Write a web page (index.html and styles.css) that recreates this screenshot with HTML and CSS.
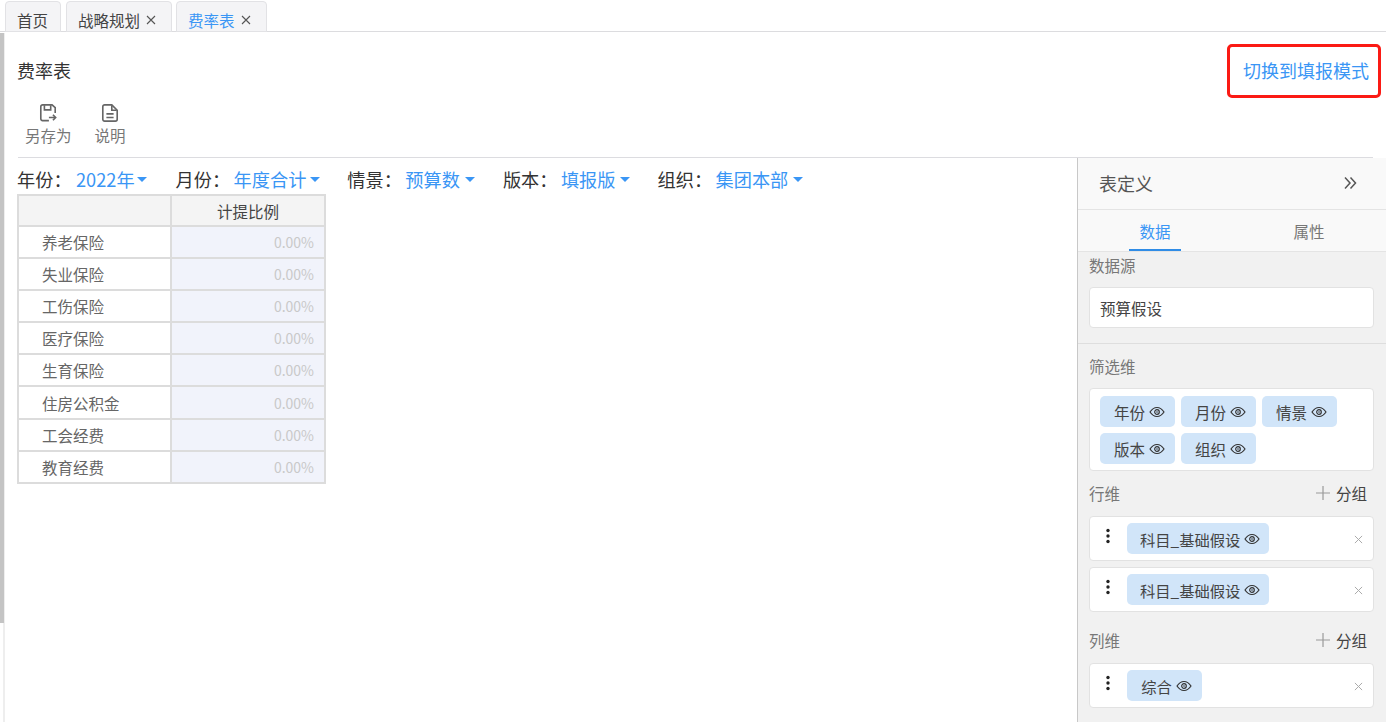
FILE: index.html
```html
<!DOCTYPE html>
<html lang="zh-CN">
<head>
  <meta charset="UTF-8" />
  <title>费率表</title>
  <link rel="stylesheet" href="styles.css">
</head>
<body>

  <svg class="defs" width="0" height="0">
    <symbol id="eye" viewBox="0 0 16 16">
      <path d="M1 8c2-3 4.400-4.500 7-4.500S13 5 15 8c-2 3-4.400 4.500-7 4.500S3 11 1 8z" fill="none" stroke="#333" stroke-width="1.200"/>
      <circle cx="8" cy="8" r="2.300" fill="none" stroke="#333" stroke-width="1.200"/>
      <circle cx="8" cy="8" r="0.800" fill="#333"/>
    </symbol>
    <symbol id="dots" viewBox="0 0 4 16">
      <circle cx="2" cy="2.500" r="1.700" fill="#222"/>
      <circle cx="2" cy="8" r="1.700" fill="#222"/>
      <circle cx="2" cy="13.500" r="1.700" fill="#222"/>
    </symbol>
    <symbol id="close" viewBox="0 0 10 10">
      <path d="M1 1l8 8M9 1l-8 8" fill="none" stroke="currentColor" stroke-width="1.100"/>
    </symbol>
    <symbol id="plus" viewBox="0 0 16 16">
      <path d="M8 1v14M1 8h14" fill="none" stroke="#9a9a9a" stroke-width="1.200"/>
    </symbol>
  </svg>

  <div class="tabs">
    <div class="tab tab-home">首页</div>
    <div class="tab tab-plan">战略规划<svg class="tab-close"><use href="#close"/></svg></div>
    <div class="tab tab-rate active">费率表<svg class="tab-close"><use href="#close"/></svg></div>
  </div>

  <div class="page">
    <div class="scroll-thumb"></div>

    <div class="title-row">
      <h1>费率表</h1>
      <a class="switch-mode">切换到填报模式</a>
    </div>

    <div class="tools">
      <div class="tool tool-save">
        <svg width="18" height="18" viewBox="0 0 20 20" fill="none" stroke="#666" stroke-width="1.800">
          <path d="M11 18.500H4a2 2 0 0 1-2-2V3a2 2 0 0 1 2-2h10.500L18 4v6"/>
          <path d="M6 1.500V6.500h7V1.500"/>
          <path d="M11 15h7.500M15.500 12l3 3-3 3"/>
        </svg>
        <span>另存为</span>
      </div>
      <div class="tool tool-note">
        <svg width="18" height="18" viewBox="0 0 20 20" fill="none" stroke="#666" stroke-width="1.800">
          <path d="M4 1h8l6 6v10a2 2 0 0 1-2 2H4a2 2 0 0 1-2-2V3a2 2 0 0 1 2-2z"/>
          <path d="M12 1.500V7h5.500M6 11h8M6 15h8"/>
        </svg>
        <span>说明</span>
      </div>
    </div>

    <div class="main">
      <div class="content">
        <div class="filters">
          <div class="filter f-year"><label>年份：</label><span class="val">2022年</span><i class="caret"></i></div>
          <div class="filter f-month"><label>月份：</label><span class="val">年度合计</span><i class="caret"></i></div>
          <div class="filter f-scene"><label>情景：</label><span class="val">预算数</span><i class="caret"></i></div>
          <div class="filter f-ver"><label>版本：</label><span class="val">填报版</span><i class="caret"></i></div>
          <div class="filter f-org"><label>组织：</label><span class="val">集团本部</span><i class="caret"></i></div>
        </div>

        <table class="rate-table">
          <tr><th></th><th>计提比例</th></tr>
          <tr><td class="name">养老保险</td><td class="num">0.00%</td></tr>
          <tr><td class="name">失业保险</td><td class="num">0.00%</td></tr>
          <tr><td class="name">工伤保险</td><td class="num">0.00%</td></tr>
          <tr><td class="name">医疗保险</td><td class="num">0.00%</td></tr>
          <tr><td class="name">生育保险</td><td class="num">0.00%</td></tr>
          <tr><td class="name">住房公积金</td><td class="num">0.00%</td></tr>
          <tr><td class="name">工会经费</td><td class="num">0.00%</td></tr>
          <tr><td class="name">教育经费</td><td class="num">0.00%</td></tr>
        </table>
      </div>

      <div class="panel">
        <div class="panel-head">
          <span>表定义</span>
          <svg width="14" height="14" viewBox="0 0 14 14" fill="none" stroke="#555" stroke-width="1.500">
            <path d="M2 1.500L7 7l-5 5.500M7.500 1.500L12.500 7l-5 5.500"/>
          </svg>
        </div>
        <div class="panel-tabs">
          <div class="panel-tab active">数据</div>
          <div class="panel-tab">属性</div>
        </div>

        <div class="section source">
          <div class="sec-title">数据源</div>
          <div class="box source-box">预算假设</div>
        </div>

        <div class="section">
          <div class="sec-title filter-title">筛选维</div>
          <div class="box chips-box">
            <span class="chip">年份<svg class="eye"><use href="#eye"/></svg></span>
            <span class="chip">月份<svg class="eye"><use href="#eye"/></svg></span>
            <span class="chip">情景<svg class="eye"><use href="#eye"/></svg></span>
            <span class="chip">版本<svg class="eye"><use href="#eye"/></svg></span>
            <span class="chip">组织<svg class="eye"><use href="#eye"/></svg></span>
          </div>

          <div class="sec-row">
            <span class="sec-title">行维</span>
            <span class="add"><svg width="16" height="16"><use href="#plus"/></svg>分组</span>
          </div>
          <div class="box row-box">
            <svg class="dots"><use href="#dots"/></svg>
            <span class="chip">科目_基础假设<svg class="eye"><use href="#eye"/></svg></span>
            <svg class="row-close"><use href="#close"/></svg>
          </div>
          <div class="box row-box">
            <svg class="dots"><use href="#dots"/></svg>
            <span class="chip">科目_基础假设<svg class="eye"><use href="#eye"/></svg></span>
            <svg class="row-close"><use href="#close"/></svg>
          </div>

          <div class="sec-row col-row">
            <span class="sec-title">列维</span>
            <span class="add"><svg width="16" height="16"><use href="#plus"/></svg>分组</span>
          </div>
          <div class="box row-box">
            <svg class="dots"><use href="#dots"/></svg>
            <span class="chip">综合<svg class="eye"><use href="#eye"/></svg></span>
            <svg class="row-close"><use href="#close"/></svg>
          </div>
        </div>
      </div>
    </div>
  </div>

</body>
</html>
```

FILE: styles.css
```css
html, body {
  height: 100%;
}

body {
  margin: 0;
  font-family: "Noto Sans CJK SC", "Noto Sans", sans-serif;
  color: #333;
  background: #fff;
  overflow: hidden;
  display: flex;
  flex-direction: column;
}

.defs {
  position: absolute;
}

.tabs {
  display: flex;
  align-items: flex-end;
  height: 32px;
  box-sizing: border-box;
  padding-left: 5px;
  gap: 5px;
  border-bottom: 1px solid #dcdcdf;
  flex: none;
}

.tab {
  height: 31px;
  box-sizing: border-box;
  margin-bottom: -1px;
  background: #f4f4f6;
  border: 1px solid #e2e2e5;
  border-radius: 4px 4px 0 0;
  display: flex;
  align-items: center;
  padding: 7px 0 0 11px;
  font-size: 15.500px;
  line-height: 20px;
  color: #444;
}

.tab-home { width: 56px; }
.tab-plan { width: 106px; }
.tab-rate { width: 91px; margin-left: -1px; }

.tab.active {
  color: #3a96f5;
}

.tab-close {
  width: 10px;
  height: 10px;
  margin-left: 6px;
  color: #555;
}

.page {
  position: relative;
  flex: 1;
  min-height: 0;
  display: flex;
  flex-direction: column;
}

/* faint scrollbar track down the left edge */
.page::before {
  content: "";
  position: absolute;
  left: 3px;
  top: 1px;
  bottom: 0;
  width: 2px;
  background: #eeeeee;
}

.scroll-thumb {
  position: absolute;
  left: 0;
  top: 1px;
  width: 4px;
  height: 590px;
  background: #c4c4c4;
}

.title-row {
  display: flex;
  justify-content: space-between;
  align-items: center;
  padding: 12px 5px 0 17px;
  flex: none;
}

h1 {
  margin: -2px 0 0;
  font-size: 18px;
  font-weight: 400;
  color: #333;
}

.switch-mode {
  box-sizing: border-box;
  width: 154px;
  height: 54px;
  border: 3px solid #fb1a14;
  border-radius: 5px;
  padding-left: 13px;
  font-size: 18px;
  line-height: 46px;
  white-space: nowrap;
  color: #3a96f5;
}

.tools {
  display: flex;
  height: 60px;
  box-sizing: border-box;
  margin: 0 13px 0 18px;
  padding: 6px 0 0 7px;
  gap: 23px;
  border-bottom: 1px solid #dcdce0;
  flex: none;
}

.tool {
  display: flex;
  flex-direction: column;
  align-items: center;
  font-size: 15.500px;
  line-height: 22px;
  color: #777;
}

.tool svg {
  margin-bottom: 2px;
}

.main {
  flex: 1;
  min-height: 0;
  display: flex;
}

.content {
  flex: 1;
  min-width: 0;
  padding-left: 18px;
}

.filters {
  display: flex;
  height: 36px;
  box-sizing: border-box;
  padding-top: 6px;
  margin-left: -1px;
  align-items: center;
  font-size: 18.200px;
  white-space: nowrap;
}

.filter {
  display: flex;
  align-items: center;
}

.filter label {
  color: #333;
  width: 58px;
}

.val {
  color: #3a96f5;
}

.caret {
  width: 0;
  height: 0;
  margin-left: 4px;
  border-left: 5px solid transparent;
  border-right: 5px solid transparent;
  border-top: 5px solid #3a96f5;
}

.f-year label {
  width: 59px;
}

.f-year .caret {
  margin-left: 2px;
}

.f-scene .caret,
.f-org .caret {
  margin-left: 5px;
}

.f-month { margin-left: 29px; }
.f-scene { margin-left: 27px; }
.f-ver { margin-left: 28px; }
.f-org { margin-left: 28px; }

.rate-table {
  border-collapse: collapse;
  table-layout: fixed;
  width: 309px;
  margin-left: -1px;
  font-size: 15.500px;
}

.rate-table th,
.rate-table td {
  border: 2px solid #dcdcdc;
  height: 32.100px;
  padding: 0;
  box-sizing: border-box;
}

.rate-table th {
  height: 31px;
  background: #f4f4f4;
  font-weight: 400;
  color: #444;
}

.rate-table th:first-child {
  width: 153px;
}

.rate-table .name {
  padding-left: 23px;
  color: #666;
}

.rate-table .num {
  background: #f1f3fb;
  text-align: right;
  padding-right: 10px;
  font-size: 14px;
  color: #c9c9c9;
}

.panel {
  width: 309px;
  box-sizing: border-box;
  flex: none;
  background: #f1f1f1;
  border-left: 1px solid #c8c8c8;
}

.panel-head {
  display: flex;
  justify-content: space-between;
  align-items: center;
  height: 52px;
  box-sizing: border-box;
  padding: 0 29px 2px 21px;
  background: #f9f9f9;
  border-bottom: 1px solid #e4e4e4;
  font-size: 18px;
  color: #555;
}

.panel-tabs {
  display: flex;
  height: 42px;
  box-sizing: border-box;
  background: #f9f9f9;
  border-bottom: 1px solid #e4e4e4;
}

.panel-tab {
  width: 154px;
  text-align: center;
  font-size: 15.500px;
  line-height: 42px;
  color: #777;
  position: relative;
}

.panel-tab.active {
  color: #3a96f5;
}

.panel-tab.active::after {
  content: "";
  position: absolute;
  left: 51px;
  bottom: 0;
  width: 52px;
  height: 2px;
  background: #2f8ce6;
}

.section {
  padding: 0 12px 0 11px;
}

.source {
  height: 92px;
  padding-top: 2px;
  box-sizing: border-box;
  border-bottom: 1px solid #dedede;
}

.sec-title {
  font-size: 15.500px;
  line-height: 22px;
  color: #777;
}

.box {
  background: #fff;
  border: 1px solid #e2e2e2;
  border-radius: 4px;
  box-sizing: border-box;
}

.source-box {
  height: 41px;
  margin-top: 11px;
  padding-left: 10px;
  font-size: 15.500px;
  line-height: 40px;
  color: #444;
}

.filter-title {
  margin-top: 11px;
}

.chips-box {
  display: flex;
  flex-wrap: wrap;
  gap: 6px;
  height: 83px;
  margin-top: 11px;
  padding: 7px 10px;
  align-content: flex-start;
}

.chip {
  display: inline-flex;
  align-items: center;
  justify-content: center;
  height: 31px;
  min-width: 75px;
  box-sizing: border-box;
  padding: 0 9px 0 13px;
  background: #d1e5f9;
  border-radius: 5px;
  font-size: 15.500px;
  color: #444;
}

.eye {
  width: 16px;
  height: 16px;
  margin-left: 4px;
}

.sec-row {
  display: flex;
  justify-content: space-between;
  align-items: center;
  height: 22px;
  margin-top: 11px;
}

.col-row {
  margin-top: 17px;
}

.add {
  display: flex;
  align-items: center;
  gap: 5px;
  margin-right: 7px;
  font-size: 15.500px;
  color: #444;
}

.row-box {
  display: flex;
  align-items: center;
  height: 45px;
  margin-top: 12px;
  padding-left: 37px;
  position: relative;
}

.row-box + .row-box {
  margin-top: 6px;
}

.col-row + .row-box {
  margin-top: 12px;
}

.row-box .chip {
  font-size: 15.300px;
}

.dots {
  position: absolute;
  left: 16px;
  top: 11px;
  width: 4px;
  height: 16px;
}

.row-close {
  position: absolute;
  right: 10px;
  top: 18px;
  width: 9px;
  height: 9px;
  color: #aaa;
}
```
